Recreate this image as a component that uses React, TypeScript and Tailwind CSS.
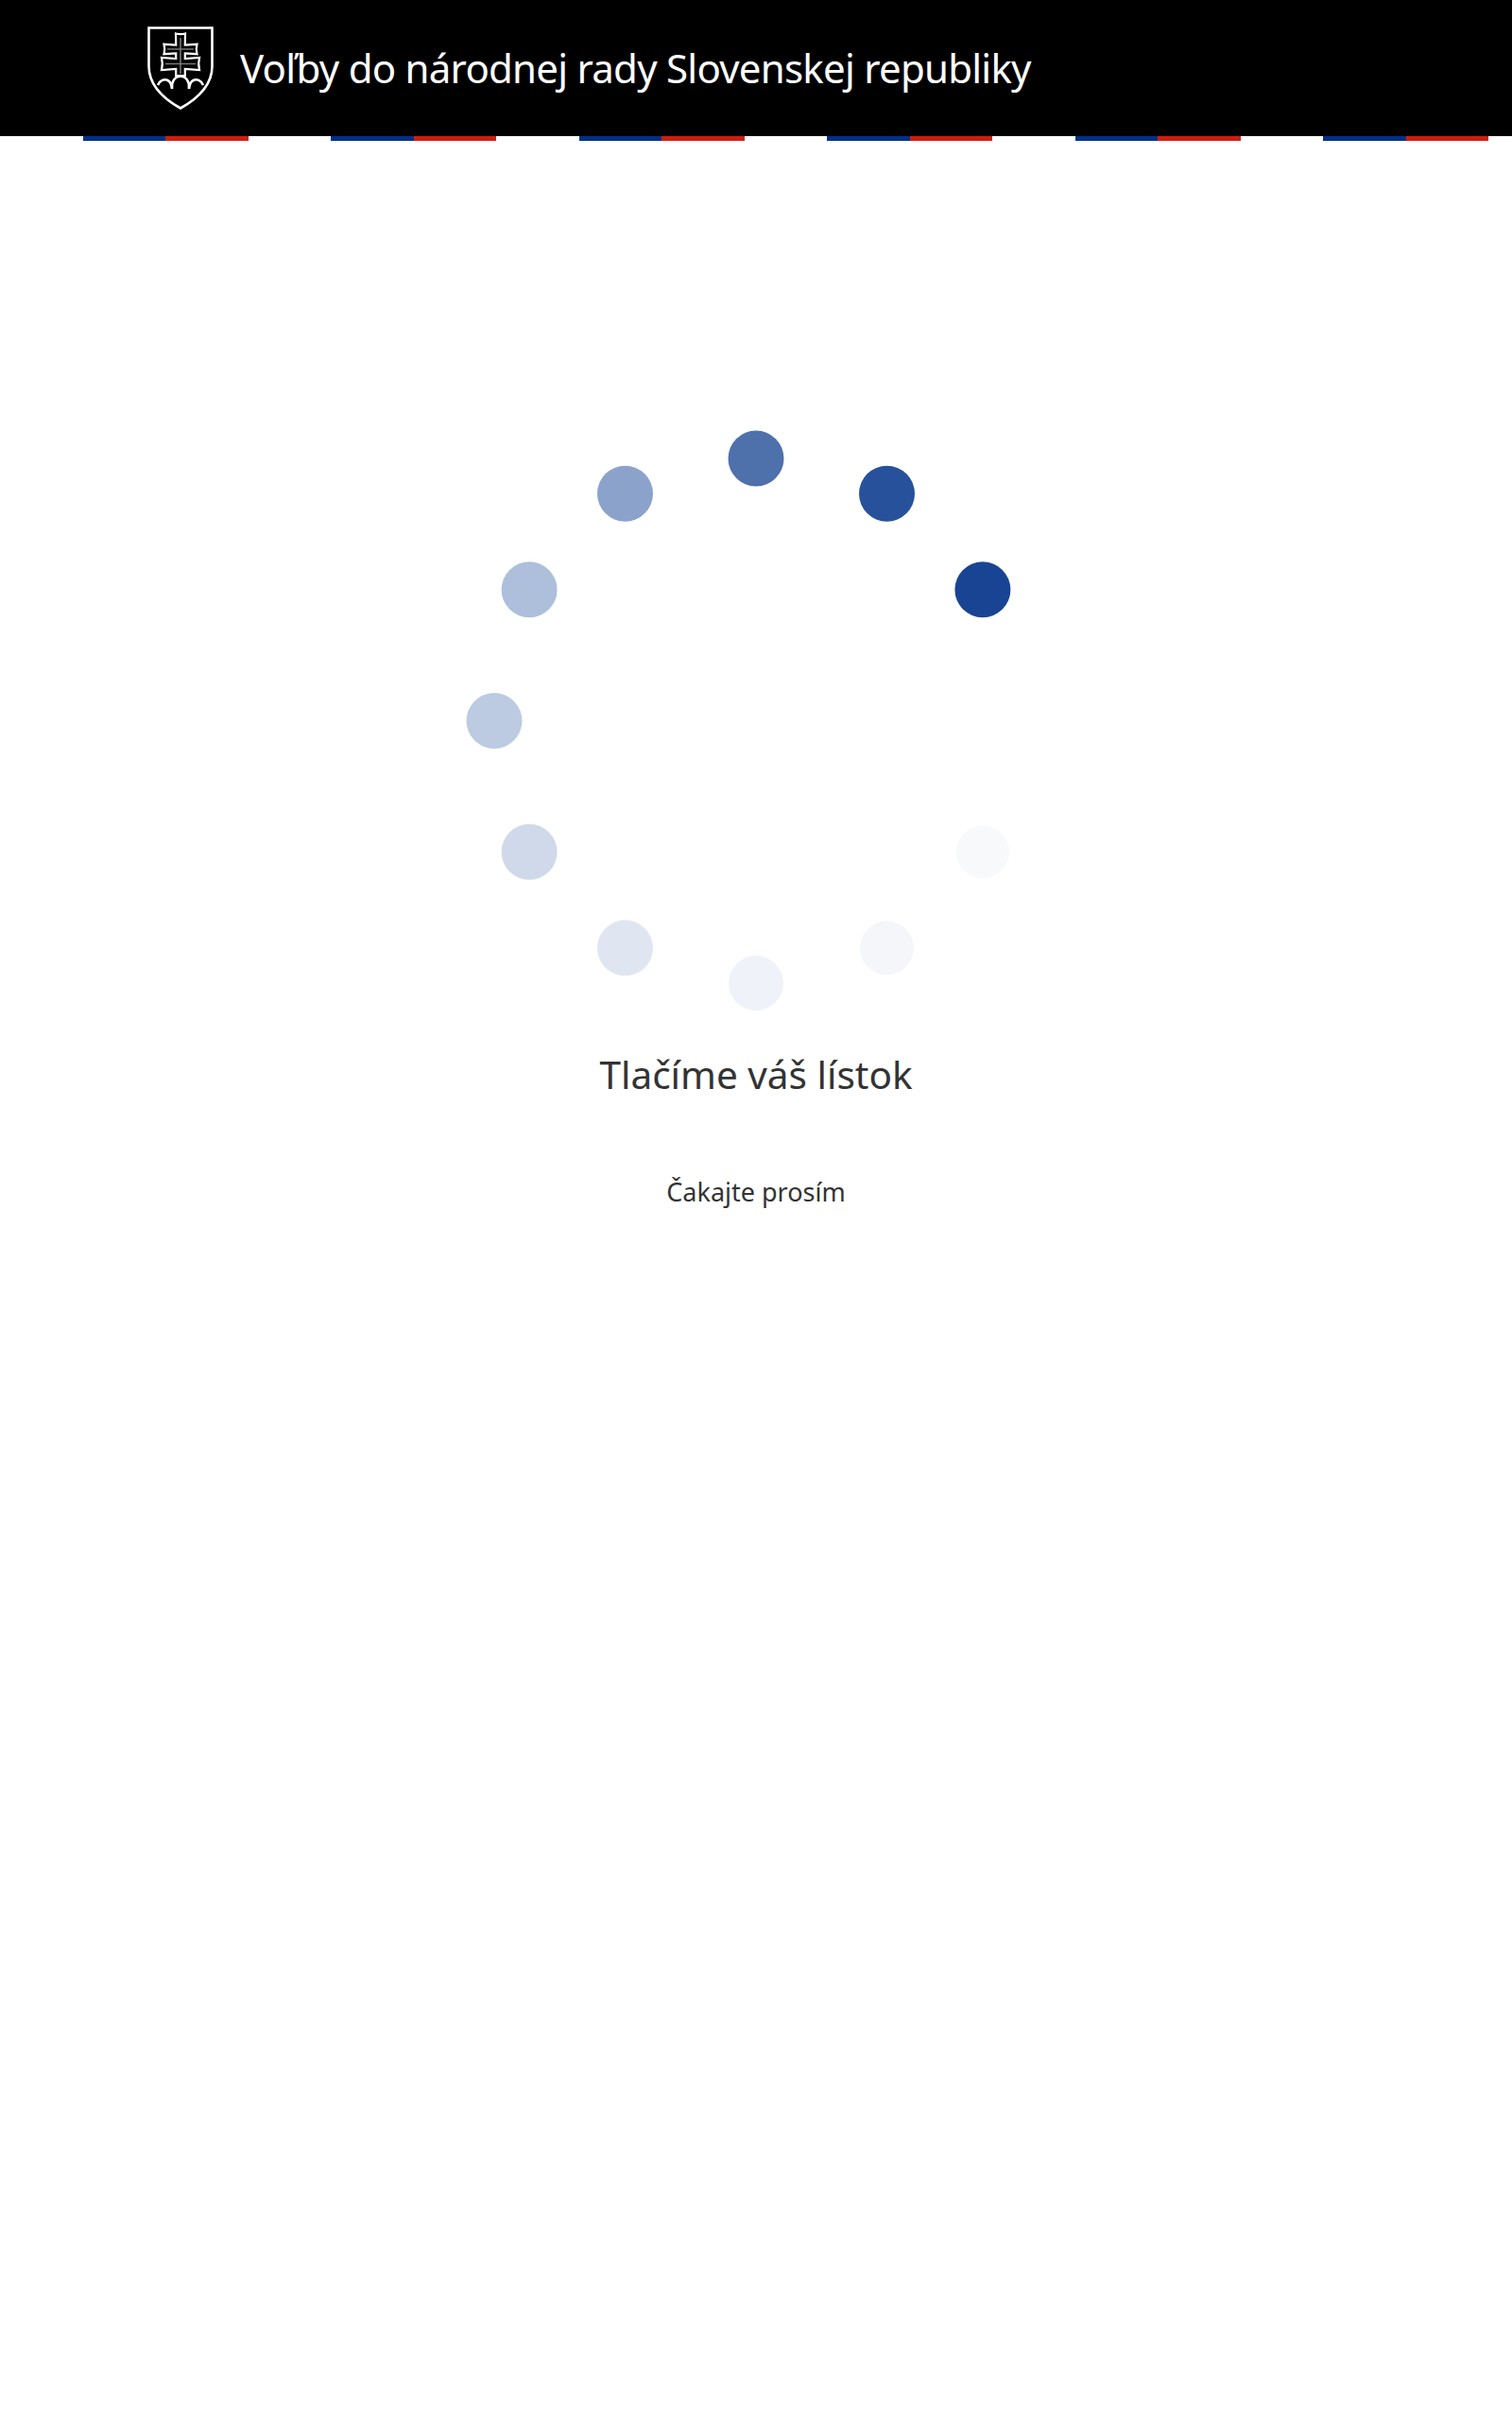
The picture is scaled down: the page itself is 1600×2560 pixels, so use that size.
const stripes = [0, 1, 2, 3, 4, 5];

const spinnerDots = [
  { angle: -30, r: 29.5, fill: "#194493" },
  { angle: -60, r: 29.5, fill: "#27529b" },
  { angle: -90, r: 29.5, fill: "#4e70ab" },
  { angle: -120, r: 29.5, fill: "#8ba3ca" },
  { angle: -150, r: 29.5, fill: "#adbfdb" },
  { angle: 180, r: 29.5, fill: "#bccbe1" },
  { angle: 150, r: 29.5, fill: "#cfd9e9" },
  { angle: 120, r: 29.5, fill: "#e0e6f1" },
  { angle: 90, r: 29, fill: "#eff2f8" },
  { angle: 60, r: 28.5, fill: "#f4f6fa" },
  { angle: 30, r: 28, fill: "#f8f9fb" },
];

function Shield() {
  return (
    <svg width="70" height="88" viewBox="0 0 70 88" fill="none" stroke="#fff" strokeWidth="2.6" className="shrink-0">
      <path d="M1.5 1.5H68.5V42C68.5 62 52 77 35 86.5C18 77 1.5 62 1.5 42Z" />
      <path
        d="M30 7.5C33 8.3 37 8.3 40 7.5L39.8 19.5L52.5 18.8C51.6 22 51.6 26 52.5 29.2L39.8 28.5V34L55 33C54 37 54 42 55 46L39.8 45V52H30.2V45L15 46C16 42 16 37 15 33L30.2 34V28.5L17.5 29.2C18.4 26 18.4 22 17.5 18.8L30.2 19.5Z"
        strokeWidth="2.2"
      />
      <path d="M35 12V50M21 24H49M19 39.5H51" stroke="#777" strokeWidth="1.6" />
      <path d="M11 62C13 57 18 55 21.5 57C24.5 58.5 25.5 61 26 66C25.5 58 29 53 35 52.5C41 53 44.5 58 44 66C44.5 61 45.5 58.5 48.5 57C52 55 57 57 59 62" />
    </svg>
  );
}

export default function App() {
  return (
    <div className="min-h-[2560px] bg-white font-['Noto_Sans','Open_Sans',sans-serif] text-[#333]">
      <header className="flex h-[144px] items-center gap-[28px] bg-black pl-[156px]">
        <Shield />
        <h1 className="text-[42px] leading-none font-normal tracking-[-0.75px] text-white">
          Voľby do národnej rady Slovenskej republiky
        </h1>
      </header>
      <div className="flex h-[5px]">
        {stripes.map((i) => (
          <div key={i} className="ml-[87.5px] flex w-[175px]">
            <div className="w-1/2 bg-[#003087]" />
            <div className="w-1/2 bg-[#d41c10]" />
          </div>
        ))}
      </div>
      <main className="flex flex-col items-center pt-[291px]">
        <svg width="640" height="640" viewBox="0 0 640 640">
          {spinnerDots.map((d) => (
            <circle
              key={d.angle}
              cx={320 + 277 * Math.cos((d.angle * Math.PI) / 180)}
              cy={322.5 + 277.5 * Math.sin((d.angle * Math.PI) / 180)}
              r={d.r}
              fill={d.fill}
            />
          ))}
        </svg>
        <h2 className="mt-[33px] text-[40.5px] leading-[48px] font-normal">Tlačíme váš lístok</h2>
        <p className="mt-[80px] text-[27px] leading-[40px]">Čakajte prosím</p>
      </main>
    </div>
  );
}
